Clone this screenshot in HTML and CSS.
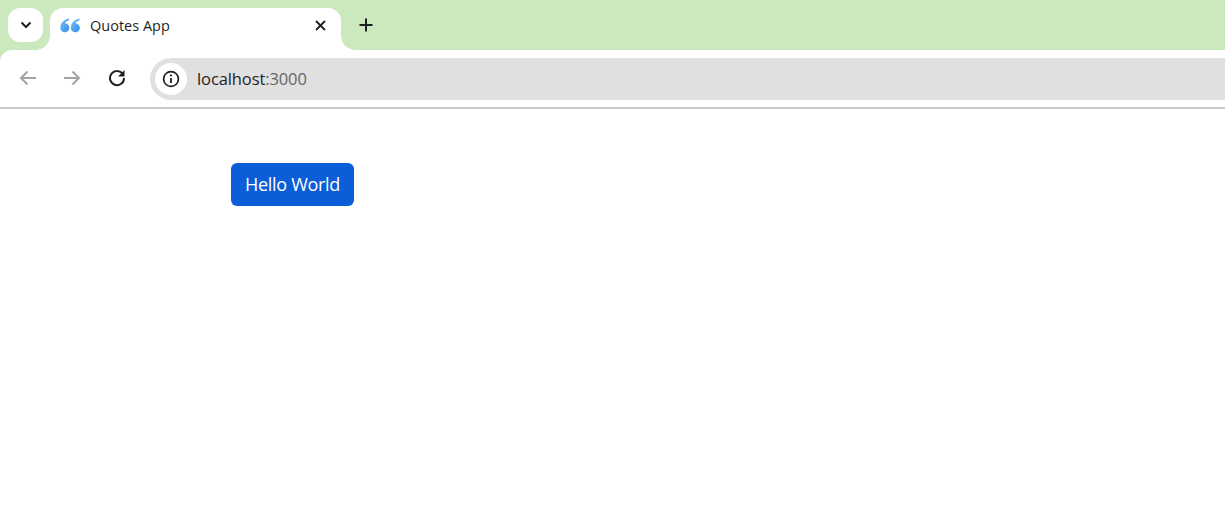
FILE: index.html
```html
<!DOCTYPE html>
<html lang="en">
<head>
<meta charset="utf-8">
<title>Quotes App</title>
<link rel="stylesheet" href="styles.css">
</head>
<body>
<header class="chrome">
  <div class="tabstrip">
    <button class="tab-search" aria-label="Search tabs">
      <svg width="12" height="8" viewBox="0 0 12 8"><path d="M1.500 1.500 6 6l4.500-4.500" fill="none" stroke="#1f1f1f" stroke-width="2"/></svg>
    </button>
    <div class="tab">
      <svg class="favicon" width="20" height="15" viewBox="0 0 20 15">
        <defs><linearGradient id="q" x1="0" y1="0" x2="1" y2="1"><stop offset="0" stop-color="#7cc0f5"/><stop offset="1" stop-color="#2f8ff0"/></linearGradient></defs>
        <path d="M9 .5C4.500 1.500.3 4.500.3 9.800a4.500 4.500 0 1 0 4.700-4.500C5.600 4 7 3 9 2.300Z" fill="url(#q)"/>
        <path d="M19.500 .5C15 1.500 10.800 4.500 10.800 9.800a4.500 4.500 0 1 0 4.700-4.500c.6-1.300 2-2.300 4-3Z" fill="url(#q)"/>
      </svg>
      <span class="tab-title">Quotes App</span>
      <svg class="tab-close" width="11" height="11" viewBox="0 0 11 11"><path d="M1 1l9 9M10 1 1 10" stroke="#1f1f1f" stroke-width="1.800"/></svg>
    </div>
    <button class="new-tab" aria-label="New tab">
      <svg width="14" height="14" viewBox="0 0 14 14"><path d="M7 .5v13M.5 7h13" stroke="#1f1f1f" stroke-width="2"/></svg>
    </button>
  </div>
  <div class="toolbar">
    <svg class="nav-icon" width="18" height="16" viewBox="0 0 18 16"><path d="M17 8H2M8.500 1.500 2 8l6.500 6.500" fill="none" stroke="#a3a3a3" stroke-width="2"/></svg>
    <svg class="nav-icon" width="18" height="16" viewBox="0 0 18 16"><path d="M1 8h15M9.500 1.500 16 8l-6.500 6.500" fill="none" stroke="#a3a3a3" stroke-width="2"/></svg>
    <svg class="nav-icon" width="18" height="18" viewBox="0 0 18 18"><path d="M15 5.500A7 7 0 1 0 16 9" fill="none" stroke="#1f1f1f" stroke-width="2"/><path d="M16.500 1v6.500H10Z" fill="#1f1f1f"/></svg>
    <div class="omnibox">
      <span class="site-info">
        <svg width="18" height="18" viewBox="0 0 18 18"><circle cx="9" cy="9" r="7.400" fill="none" stroke="#1f1f1f" stroke-width="1.700"/><path d="M9 8v5" stroke="#1f1f1f" stroke-width="1.800"/><circle cx="9" cy="5.500" r="1.100" fill="#1f1f1f"/></svg>
      </span>
      <span class="url">localhost<span class="port">:3000</span></span>
    </div>
  </div>
</header>
<main class="page">
  <button class="primary">Hello World</button>
</main>
</body>
</html>
```
FILE: styles.css
```css
* { box-sizing: border-box; }
html, body { margin: 0; height: 100%; background: #fff; }
body { font-family: "Open Sans", "Noto Sans", sans-serif; overflow: hidden; }
button { border: 0; padding: 0; font: inherit; }

.chrome { background: #cbe9bd; border-bottom: 2px solid #cccccc; }

.tabstrip {
  height: 50px;
  display: flex;
  align-items: flex-end;
  padding-left: 8px;
}
.tab-search {
  width: 35px; height: 34px;
  margin-bottom: 8px;
  background: #fff;
  border-radius: 12px;
  display: flex; align-items: center; justify-content: center;
}
.tab {
  position: relative;
  width: 291px; height: 42px;
  margin-left: 7px;
  padding: 0 15px 8px 10px;
  background: #fff;
  border-radius: 13px 13px 0 0;
  display: flex; align-items: center;
  font-size: 14.500px;
  color: #1f1f1f;
}
.tab::before, .tab::after {
  content: "";
  position: absolute;
  bottom: 0;
  width: 14px; height: 14px;
}
.tab::before { left: -14px; background: radial-gradient(circle at 0 0, transparent 13.500px, #fff 14px); }
.tab::after { right: -14px; background: radial-gradient(circle at 100% 0, transparent 13.500px, #fff 14px); }
.favicon { flex: none; }
.tab-title { margin-left: 10px; flex: 1; }
.tab-close { flex: none; }
.new-tab {
  width: 14px; height: 14px;
  margin: 0 0 18px 18px;
  background: none;
  display: flex;
}

.toolbar {
  height: 57px;
  background: #fff;
  border-radius: 12px 0 0 0;
  display: flex;
  align-items: center;
  padding: 0 0 1px 19px;
  position: relative;
}
.nav-icon { flex: none; margin-right: 27px; }
.nav-icon:nth-child(2) { margin-left: -1px; }
.nav-icon:nth-child(3) { margin-right: 24px; }
.omnibox {
  flex: 1;
  height: 42px;
  margin-top: 1px;
  background: #e0e0e0;
  border-radius: 21px 0 0 21px;
  display: flex; align-items: center;
  padding-left: 5px;
}
.site-info {
  width: 32px; height: 32px;
  background: #fff;
  border-radius: 50%;
  display: flex; align-items: center; justify-content: center;
}
.url { margin-left: 10px; font-size: 16.500px; color: #1f1f1f; letter-spacing: -.1px; }
.port { color: #666; }

.page { padding: 54px 0 0 231px; }
.primary {
  width: 123px; height: 43px;
  padding-bottom: 2px;
  background: #0b5ed7;
  color: #fff;
  border-radius: 6px;
  font-size: 18px;
  display: block;
  letter-spacing: -.3px;
}
```
